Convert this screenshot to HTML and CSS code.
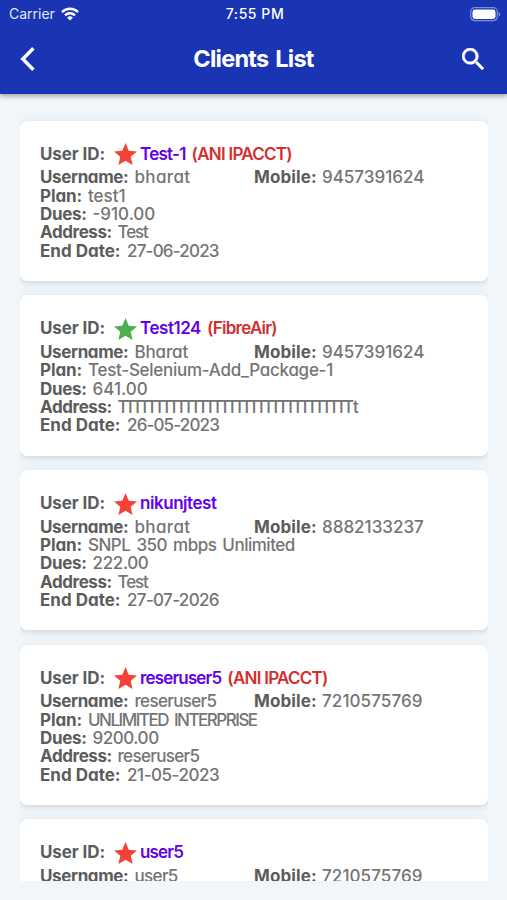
FILE: index.html
```
<!DOCTYPE html>
<html lang="en">
<head>
<meta charset="utf-8">
<title>Clients List</title>
<link rel="stylesheet" href="styles.css">
</head>
<body>
<svg class="defs" width="0" height="0"><symbol id="star" viewBox="2 2 20 19"><path d="M12 17.27 18.18 21l-1.64-7.03L22 9.24l-7.19-.61L12 2 9.19 8.63 2 9.24l5.46 4.73L5.82 21z"/></symbol></svg>
<header class="header">
  <div class="status">
    <div class="carrier">Carrier
      <svg width="18" height="14" viewBox="0 0 18 14" fill="none" stroke="#fff" stroke-width="2.4"><path d="M1 5.1a11.4 11.4 0 0 1 16 0M4 8.3a7.2 7.2 0 0 1 10 0"/><path d="M9 13.6 6.1 10.7a4.2 4.2 0 0 1 5.8 0z" fill="#fff" stroke="none"/></svg>
    </div>
    <div class="time">7:55 PM</div>
    <svg class="battery" width="31" height="15" viewBox="0 0 31 15"><rect x=".7" y=".7" width="26.6" height="13" rx="4" fill="none" stroke="#7f8fd6" stroke-width="1.2"/><rect x="2.5" y="2.5" width="23" height="9.4" rx="2.4" fill="#fff"/><path d="M28.6 5v4.6q1.6-.6 1.6-2.3T28.6 5z" fill="#7f8fd6"/></svg>
  </div>
  <div class="bar">
    <svg class="back" width="16" height="26" viewBox="0 0 16 26"><path d="M13.4 2.3 2.8 13l10.6 10.7" fill="none" stroke="#fff" stroke-width="3.5"/></svg>
    <h1>Clients List</h1>
    <svg class="search" width="22" height="22" viewBox="3 3 17.49 17.49" fill="#fff" stroke="#fff" stroke-width=".4"><path d="M15.5 14h-.79l-.28-.27A6.47 6.47 0 0 0 16 9.5 6.5 6.5 0 1 0 9.5 16c1.61 0 3.09-.59 4.23-1.57l.27.28v.79l5 4.99L20.49 19l-4.99-5zm-6 0C7.01 14 5 11.99 5 9.5S7.01 5 9.5 5 14 7.01 14 9.5 11.99 14 9.5 14z"/></svg>
  </div>
</header>
<main class="list">
  <article class="card">
    <div class="user"><b class="l-user">User ID:</b><svg class="star"><use href="#star"/></svg><span class="id k75">Test-1</span><span class="org k75">(ANI IPACCT)</span></div>
    <div class="pair"><div class="row"><b class="l-name">Username:</b><span class="w35">bharat</span></div><div class="row"><b class="l-mobile">Mobile:</b><span>9457391624</span></div></div>
    <div class="row"><b class="l-plan">Plan:</b><span>test1</span></div>
    <div class="row"><b class="l-dues">Dues:</b><span>-910.00</span></div>
    <div class="row"><b class="l-address">Address:</b><span class="k110">Test</span></div>
    <div class="row"><b class="l-end">End Date:</b><span class="k80">27-06-2023</span></div>
  </article>
  <article class="card">
    <div class="user"><b class="l-user">User ID:</b><svg class="star active"><use href="#star"/></svg><span class="id k45">Test124</span><span class="org k75">(FibreAir)</span></div>
    <div class="pair"><div class="row"><b class="l-name">Username:</b><span class="k15">Bharat</span></div><div class="row"><b class="l-mobile">Mobile:</b><span>9457391624</span></div></div>
    <div class="row"><b class="l-plan">Plan:</b><span class="k27">Test-Selenium-Add_Package-1</span></div>
    <div class="row"><b class="l-dues">Dues:</b><span>641.00</span></div>
    <div class="row"><b class="l-address">Address:</b><span class="k382">TTTTTTTTTTTTTTTTTTTTTTTTTTTTTTTT<span class="tail">t</span></span></div>
    <div class="row"><b class="l-end">End Date:</b><span class="k85">26-05-2023</span></div>
  </article>
  <article class="card">
    <div class="user"><b class="l-user">User ID:</b><svg class="star"><use href="#star"/></svg><span class="id k45">nikunjtest</span></div>
    <div class="pair"><div class="row"><b class="l-name">Username:</b><span class="w35">bharat</span></div><div class="row"><b class="l-mobile">Mobile:</b><span>8882133237</span></div></div>
    <div class="row"><b class="l-plan">Plan:</b><span class="plan">SNPL 350 mbps Unlimited</span></div>
    <div class="row"><b class="l-dues">Dues:</b><span class="k35">222.00</span></div>
    <div class="row"><b class="l-address">Address:</b><span class="k110">Test</span></div>
    <div class="row"><b class="l-end">End Date:</b><span class="k65">27-07-2026</span></div>
  </article>
  <article class="card">
    <div class="user"><b class="l-user">User ID:</b><svg class="star"><use href="#star"/></svg><span class="id k85">reseruser5</span><span class="org k75">(ANI IPACCT)</span></div>
    <div class="pair"><div class="row"><b class="l-name">Username:</b><span class="k65">reseruser5</span></div><div class="row"><b class="l-mobile">Mobile:</b><span class="w10">7210575769</span></div></div>
    <div class="row"><b class="l-plan">Plan:</b><span class="plan caps">UNLIMITED INTERPRISE</span></div>
    <div class="row"><b class="l-dues">Dues:</b><span class="k45">9200.00</span></div>
    <div class="row"><b class="l-address">Address:</b><span class="k65">reseruser5</span></div>
    <div class="row"><b class="l-end">End Date:</b><span class="k45">21-05-2023</span></div>
  </article>
  <article class="card">
    <div class="user"><b class="l-user">User ID:</b><svg class="star"><use href="#star"/></svg><span class="id k85">user5</span></div>
    <div class="pair"><div class="row"><b class="l-name">Username:</b><span class="k65">user5</span></div><div class="row"><b class="l-mobile">Mobile:</b><span class="w10">7210575769</span></div></div>
  </article>
</main>
</body>
</html>
```
FILE: styles.css
```
* { box-sizing: border-box; }
body {
  margin: 0;
  height: 900px;
  overflow: hidden;
  display: flex;
  flex-direction: column;
  background: #f1f6fa;
  color: #747474;
  font: 500 17px/18.35px Inter, "Liberation Sans", sans-serif;
  font-feature-settings: "cv11";
}
.defs { display: none; }
.header {
  height: 94px;
  flex: none;
  background: #1935b3;
  color: #fff;
  box-shadow: 0 2px 5px rgba(0, 0, 0, .35);
}
.status {
  height: 28px;
  padding: 0 6px 0 9px;
  display: grid;
  grid-template-columns: 1fr auto 1fr;
  align-items: center;
  font-size: 14px;
  font-feature-settings: normal;
}
.carrier { display: flex; align-items: center; gap: 6px; font-weight: 400; color: #e3e7f8; }
.time { font-weight: 500; letter-spacing: .55px; }
.battery { justify-self: end; }
.bar {
  height: 61px;
  padding: 0 23px 0 20px;
  display: grid;
  grid-template-columns: 1fr auto 1fr;
  align-items: center;
}
h1 { margin: 0; padding-left: 3px; font-size: 23.5px; line-height: 30px; font-weight: 700; letter-spacing: -.75px; word-spacing: 2px; }
.search { justify-self: end; }
.list {
  height: 787px;
  flex: none;
  margin: 0 19px 0 20px;
  padding-top: 26.7px;
  overflow: hidden;
}
.card {
  height: 160.2px;
  margin-bottom: 14.5px;
  padding: 22px 20px 0 20px;
  border-radius: 7px;
  background: #fff;
  box-shadow: 0 2px 5px rgba(0, 0, 0, .09), 0 1px 14px rgba(0, 0, 0, .06);
  white-space: nowrap;
}
.user { display: flex; height: 25.6px; line-height: 23.6px; font-weight: 600; }
.star { width: 23px; height: 22px; margin: .5px 3px 0 0; fill: #f44336; }
.star.active { fill: #4caf50; }
.id { margin-right: 6px; color: #6200ea; }
.org { color: #d32f2f; }
.pair { display: grid; grid-template-columns: 214px 1fr; }
.row { display: flex; }
b { flex: none; font-weight: 700; color: #5c5c5c; }
.l-user { width: 74px; letter-spacing: -.1px; }
.l-name { width: 94.5px; letter-spacing: -.37px; }
.l-mobile { width: 68px; letter-spacing: .1px; }
.l-plan { width: 48px; letter-spacing: -.1px; }
.l-dues { width: 52.5px; letter-spacing: -.3px; }
.l-address { width: 77.5px; letter-spacing: -.4px; }
.l-end { width: 87px; letter-spacing: 0; }
/* Per-string tracking: w widens, k tightens (hundredths of a pixel) */
.w35 { letter-spacing: .35px; }
.w10 { letter-spacing: .1px; }
.k15 { letter-spacing: -.15px; }
.k27 { letter-spacing: -.27px; }
.k35 { letter-spacing: -.35px; }
.k45 { letter-spacing: -.45px; }
.k65 { letter-spacing: -.65px; }
.k75 { letter-spacing: -.75px; }
.k80 { letter-spacing: -.8px; }
.k85 { letter-spacing: -.85px; }
.k110 { letter-spacing: -1.1px; }
.k382 { letter-spacing: -3.82px; }
.tail { margin-left: 2.6px; }
.plan { letter-spacing: -.5px; word-spacing: 2px; }
.caps { letter-spacing: -1.5px; word-spacing: 3px; }
```
